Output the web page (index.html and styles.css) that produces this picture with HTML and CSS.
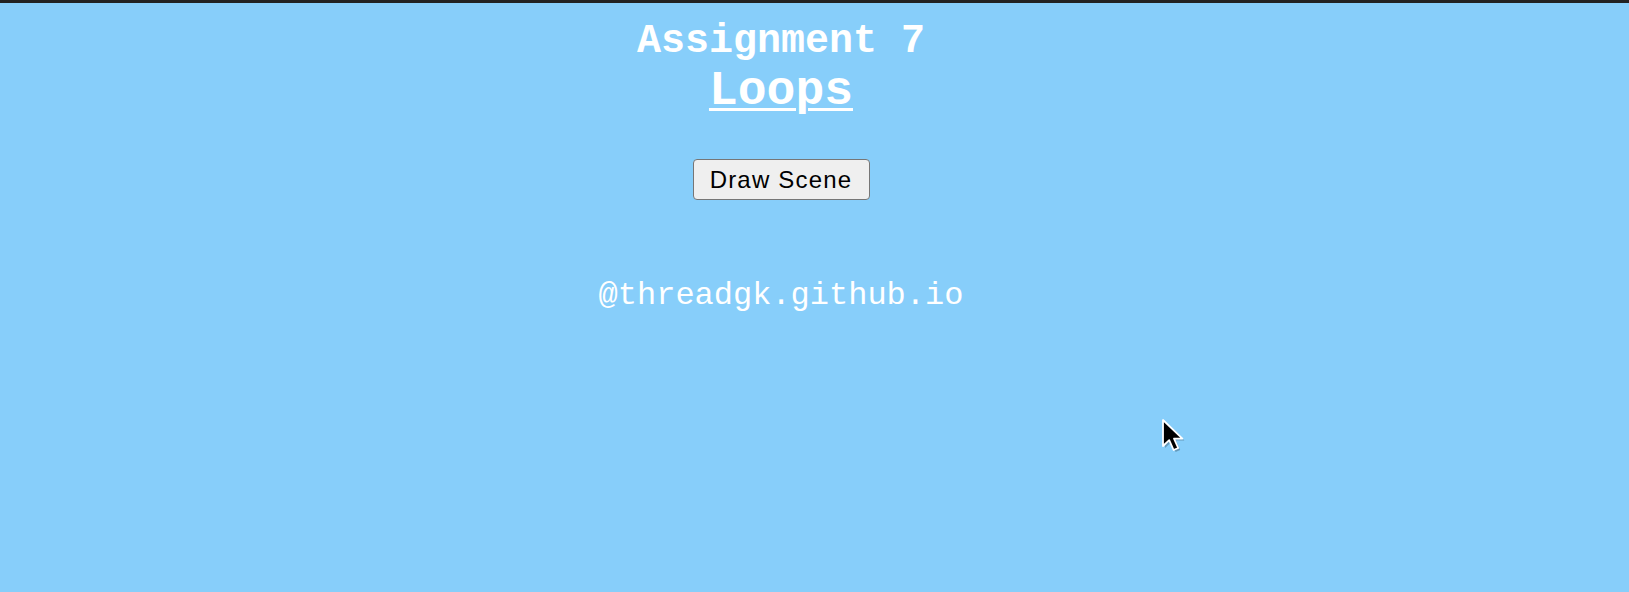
FILE: index.html
```html
<!DOCTYPE html>
<html lang="en">
<head>
<meta charset="utf-8">
<title>Assignment 7 - Loops</title>
<link rel="stylesheet" href="styles.css">
</head>
<body>
<main class="page">
  <header class="heading">
    <h1 class="title">Assignment 7</h1>
    <h2 class="subtitle">Loops</h2>
  </header>
  <div class="controls">
    <button class="draw-btn" type="button">Draw Scene</button>
  </div>
  <footer class="credit">@threadgk.github.io</footer>
</main>
<svg class="cursor" width="26" height="36" viewBox="0 0 26 36" aria-hidden="true">
  <path d="M3 3 L3 29 L9.2 23.2 L13.6 33 L18.2 31 L14 21.6 L22.4 21.6 Z" fill="rgba(0,0,0,0.25)" transform="translate(1,1)"/>
  <path d="M2 2 L2 28 L8.2 22.2 L12.6 32 L17.2 30 L13 20.6 L21.4 20.6 Z" fill="#000" stroke="#fff" stroke-width="1.8" stroke-linejoin="round"/>
</svg>
</body>
</html>
```

FILE: styles.css
```css
html, body {
  margin: 0;
  padding: 0;
}

body {
  background: #87cefa;
  border-top: 3px solid #222;
  min-height: 100vh;
  box-sizing: border-box;
  font-family: "Courier New", "Liberation Mono", monospace;
  color: #fff;
}

.page {
  width: 1562px;
  padding-top: 16px;
  display: flex;
  flex-direction: column;
  align-items: center;
  text-align: center;
}

.heading {
  display: flex;
  flex-direction: column;
  align-items: center;
}

.title {
  margin: 0;
  font-size: 40px;
  font-weight: bold;
  line-height: normal;
}

.subtitle {
  margin: 0;
  font-size: 48px;
  font-weight: bold;
  line-height: normal;
  text-decoration: underline;
  text-decoration-thickness: 3px;
  text-underline-offset: 4px;
}

.controls {
  margin-top: 41px;
}

.draw-btn {
  font-family: "Liberation Sans", Arial, sans-serif;
  font-size: 24px;
  letter-spacing: 1.2px;
  color: #000;
  background: #efefef;
  border: 1.5px solid #767676;
  border-radius: 4px;
  width: 177px;
  height: 41px;
  padding: 0;
  box-sizing: border-box;
}

.credit {
  margin-top: 77px;
  font-size: 32px;
  line-height: normal;
  font-weight: normal;
}

.cursor {
  position: absolute;
  left: 1161px;
  top: 418px;
}
```
